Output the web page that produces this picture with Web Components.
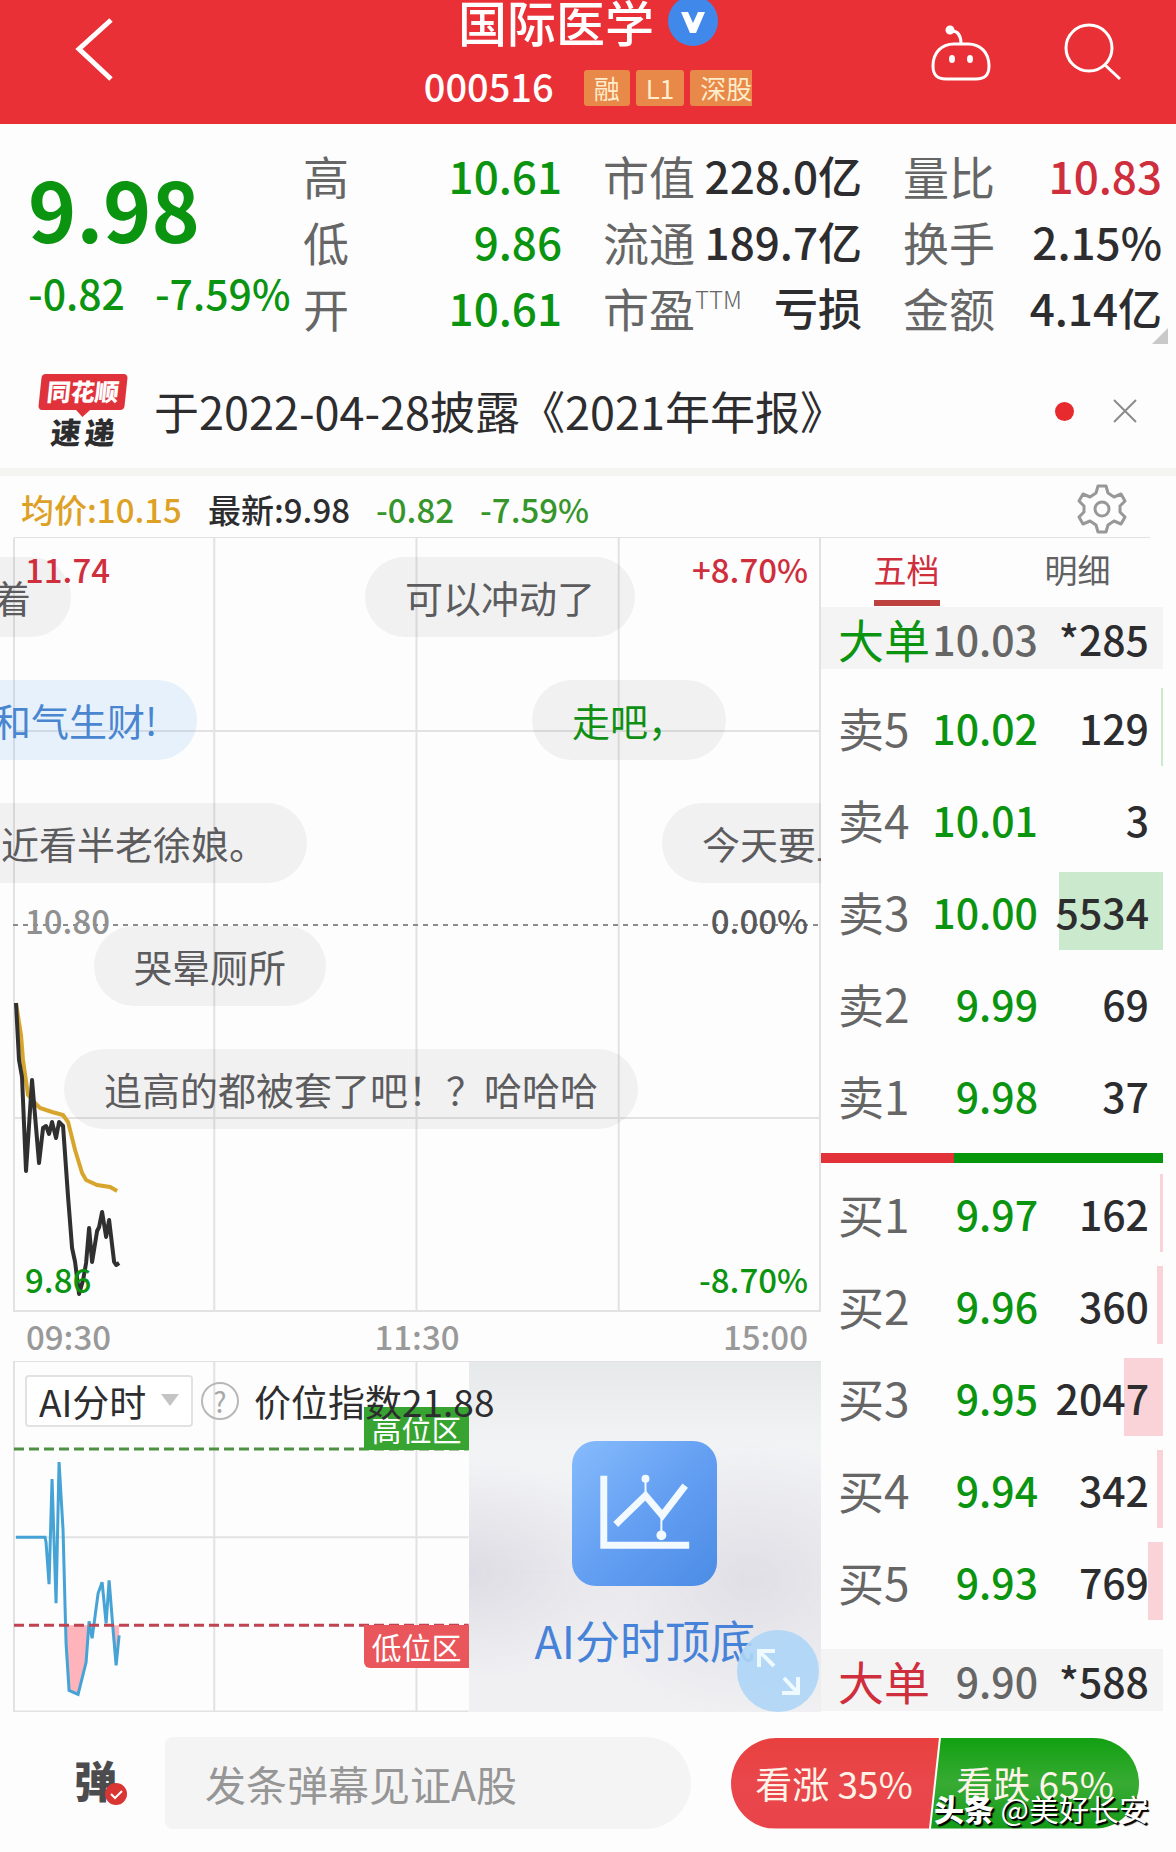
<!DOCTYPE html>
<html lang="zh-CN">
<head>
<meta charset="utf-8">
<meta name="viewport" content="width=device-width, initial-scale=1">
<title>国际医学 000516</title>
<style>
  body {
    margin: 0;
    background: #fdfdfd;
    color: #2d2d2f;
    font-family: "Noto Sans CJK SC", sans-serif;
    --red: #e93036;
    --green: #0a9410;
    --text-red: #cf2f3d;
    --label: #666;
    --line: #e2e2e2;
  }
  .board {
    display: grid;
    grid-template-columns: minmax(0, 1fr) 342px;
    padding: 0 13px;
  }
</style>
</head>
<body>
<stock-header name="国际医学" code="000516">
  <span slot="tag">融</span>
  <span slot="tag">L1</span>
  <span slot="tag">深股</span>
</stock-header>
<quote-summary price="9.98" change="-0.82" percent="-7.59%"></quote-summary>
<news-bar>于2022-04-28披露《2021年年报》</news-bar>
<info-row></info-row>
<main class="board">
  <div>
    <minute-chart>
      <bullet-text style="left: -60px; top: 19px">着</bullet-text>
      <bullet-text style="left: 352px; top: 19px">可以冲动了</bullet-text>
      <bullet-text style="left: -60px; top: 142px" tone="blue">和气生财!</bullet-text>
      <bullet-text style="left: 519px; top: 142px" tone="green">走吧，</bullet-text>
      <bullet-text style="left: -52px; top: 265px">近看半老徐娘。</bullet-text>
      <bullet-text style="left: 649px; top: 265px">今天要上</bullet-text>
      <bullet-text style="left: 81px; top: 388px">哭晕厕所</bullet-text>
      <bullet-text style="left: 51px; top: 511px">追高的都被套了吧！？哈哈哈</bullet-text>
    </minute-chart>
    <ai-chart></ai-chart>
  </div>
  <order-book></order-book>
</main>
<bottom-bar>
  <vote-bar up="35" down="65"></vote-bar>
</bottom-bar>

<script>
class StockHeader extends HTMLElement {
  constructor() {
    super();
    this.attachShadow({ mode: "open" });
  }

  static get styles() {
    return `
:host {
  display: grid;
  grid-template-columns: 1fr auto 1fr;
  height: 124px;
  background: var(--red);
  color: #fff;
  overflow: hidden;
}
button {
  padding: 0;
  border: 0;
  background: none;
  color: inherit;
}
svg { display: block; fill: none; stroke: currentColor; }
.back { justify-self: start; align-self: start; padding: 17px 0 0 74px; }
.center { display: flex; flex-direction: column; align-items: center; }
.title { display: flex; align-items: flex-start; gap: 14px; height: 60px; }
h1 { margin: 0; font-size: 49px; line-height: 42px; font-weight: 500; }
.verified { margin-top: -4px; stroke: none; }
.code { display: flex; align-items: center; height: 52px; font-size: 38px; line-height: 52px; font-weight: 500; }
.tags { display: flex; gap: 6px; margin: 4px 0 0 30px; }
::slotted(span) {
  padding: 0 10px;
  border-radius: 3px;
  background: #e8894a;
  color: #ffeccb;
  font-size: 26px;
  line-height: 36px;
  font-weight: 400;
}
::slotted(span:last-of-type) { padding-right: 0; border-radius: 3px 0 0 3px; }
.tools { display: flex; justify-content: flex-end; align-items: flex-start; gap: 72px; padding: 22px 54px 0 0; }
`;
  }

  connectedCallback() {
    this.shadowRoot.innerHTML = `
      <style>${StockHeader.styles}</style>
      <button class="back" aria-label="返回">
        <svg width="42" height="64" viewBox="0 0 42 64" stroke-width="5"><path d="M37 3 5 32 37 62"/></svg>
      </button>
      <div class="center">
        <div class="title">
          <h1>${this.getAttribute("name")}</h1>
          <svg class="verified" width="50" height="50" viewBox="0 0 50 50">
            <circle cx="25" cy="25" r="25" fill="#4089ea"/>
            <path d="M13 16h7l5 11 5-11h7L28 37h-6z" fill="#fff"/>
          </svg>
        </div>
        <div class="code">${this.getAttribute("code")}<div class="tags"><slot name="tag"></slot></div></div>
      </div>
      <div class="tools">
        <button aria-label="智能助手">
          <svg width="62" height="60" viewBox="0 0 62 60" stroke-width="3">
            <path d="M31 22c0-8-3-13-9-13"/>
            <circle cx="20" cy="8" r="3" fill="#fff"/>
            <path d="M24 22h14c13 0 21 9 21 22 0 9-4 13-13 13H16C7 57 3 53 3 44c0-13 8-22 21-22z"/>
            <g fill="#fff" stroke="none"><ellipse cx="22" cy="37" rx="3" ry="4"/><ellipse cx="40" cy="37" rx="3" ry="4"/></g>
          </svg>
        </button>
        <button aria-label="搜索">
          <svg width="58" height="60" viewBox="0 0 58 60" stroke-width="3"><circle cx="25" cy="26" r="23"/><path d="M41 43 56 57"/></svg>
        </button>
      </div>`;
  }
}
customElements.define("stock-header", StockHeader);

class QuoteSummary extends HTMLElement {
  constructor() {
    super();
    this.attachShadow({ mode: "open" });
  }

  static get styles() {
    return `
:host {
  display: grid;
  grid-template-columns: minmax(0, 234fr) repeat(3, minmax(0, 259fr));
  column-gap: 41px;
  position: relative;
  padding: 18px 14px 14px 28px;
  color: #2d2d2f;
}
.price { padding-top: 20px; color: var(--green); white-space: nowrap; }
.now { font-size: 82px; line-height: 92px; font-weight: 700; }
.diff { display: flex; gap: 30px; margin-top: 14px; font-size: 41px; line-height: 48px; font-weight: 500; }
dl { margin: 0; }
dl div { display: flex; justify-content: space-between; height: 66px; line-height: 66px; white-space: nowrap; }
dt { color: var(--label); font-size: 46px; display: flex; }
sup { font-size: 24px; line-height: 50px; font-weight: 300; }
dd { margin: 0; font-size: 44px; font-weight: 500; }
.down { color: var(--green); }
.up { color: var(--text-red); }
.corner { position: absolute; right: 8px; bottom: 10px; fill: #c9c9c9; }
`;
  }

  get groups() {
    return [
      [["高", "10.61", "down"], ["低", "9.86", "down"], ["开", "10.61", "down"]],
      [["市值", "228.0亿", ""], ["流通", "189.7亿", ""], ["市盈<sup>TTM</sup>", "亏损", ""]],
      [["量比", "10.83", "up"], ["换手", "2.15%", ""], ["金额", "4.14亿", ""]]
    ];
  }

  getGroups() {
    return this.groups
      .map(rows => `<dl>${rows
        .map(([label, value, tone]) => `<div><dt>${label}</dt><dd class="${tone}">${value}</dd></div>`).join("")}</dl>`)
      .join("");
  }

  connectedCallback() {
    this.shadowRoot.innerHTML = `
      <style>${QuoteSummary.styles}</style>
      <div class="price">
        <div class="now">${this.getAttribute("price")}</div>
        <div class="diff"><span>${this.getAttribute("change")}</span><span>${this.getAttribute("percent")}</span></div>
      </div>
      ${this.getGroups()}
      <svg class="corner" width="16" height="16"><path d="M16 0v16H0z"/></svg>`;
  }
}
customElements.define("quote-summary", QuoteSummary);

class NewsBar extends HTMLElement {
  constructor() {
    super();
    this.attachShadow({ mode: "open" });
  }

  static get styles() {
    return `
:host {
  display: flex;
  align-items: center;
  height: 114px;
  padding: 0 38px;
  border-bottom: 8px solid #f4f4f2;
}
.logo { width: 90px; text-align: center; font-weight: 900; }
.logo b {
  display: block;
  position: relative;
  height: 36px;
  margin: 0 2px;
  border-radius: 4px;
  background: #e0323a;
  color: #fff;
  font-size: 24px;
  line-height: 34px;
  font-weight: 900;
  transform: skewX(-6deg);
}
.logo b::after {
  content: "";
  position: absolute;
  left: 38px;
  top: 36px;
  border: 7px solid transparent;
  border-top-color: #e0323a;
  border-bottom: 0;
}
.logo i { display: flex; justify-content: center; gap: 4px; margin-top: 4px; font-size: 30px; line-height: 34px; font-style: normal; transform: skewX(-6deg); }
a { flex: 1; margin-left: 26px; color: #2d2d2f; font-size: 45px; line-height: 60px; text-decoration: none; white-space: nowrap; }
.dot { width: 19px; height: 19px; border-radius: 50%; background: #e62a2e; }
button { margin-left: 38px; padding: 0; border: 0; background: none; color: #8b8b8b; }
svg { display: block; }
`;
  }

  connectedCallback() {
    this.shadowRoot.innerHTML = `
      <style>${NewsBar.styles}</style>
      <div class="logo"><b>同花顺</b><i><span>速</span><span>递</span></i></div>
      <a href="#"><slot></slot></a>
      <span class="dot"></span>
      <button aria-label="关闭">
        <svg width="26" height="26" viewBox="0 0 26 26" stroke="currentColor" stroke-width="2"><path d="M2 2 24 24M24 2 2 24"/></svg>
      </button>`;
  }
}
customElements.define("news-bar", NewsBar);

class InfoRow extends HTMLElement {
  constructor() {
    super();
    this.attachShadow({ mode: "open" });
  }

  static get styles() {
    return `
:host {
  display: flex;
  align-items: center;
  gap: 26px;
  height: 57px;
  margin: 0 26px 0 14px;
  padding: 4px 22px 0 7px;
  border-bottom: 1px solid var(--line);
  font-size: 33px;
  line-height: 48px;
  font-weight: 500;
}
.avg { color: #dda125; }
.down { color: #36952b; }
button { margin-left: auto; padding: 0; border: 0; background: none; }
svg { display: block; }
`;
  }

  connectedCallback() {
    this.shadowRoot.innerHTML = `
      <style>${InfoRow.styles}</style>
      <span class="avg">均价:10.15</span>
      <span>最新:9.98</span>
      <span class="down">-0.82</span>
      <span class="down">-7.59%</span>
      <button aria-label="设置">
        <svg width="52" height="52" viewBox="0 0 52 52" fill="none" stroke="#989898" stroke-width="3" stroke-linejoin="round">
          <path d="M22 3h8l2 7 6 4 7-3 4 7-5 5v6l5 5-4 7-7-3-6 4-2 7h-8l-2-7-6-4-7 3-4-7 5-5v-6l-5-5 4-7 7 3 6-4z"/>
          <circle cx="26" cy="26" r="7"/>
        </svg>
      </button>`;
  }
}
customElements.define("info-row", InfoRow);

class BulletText extends HTMLElement {
  constructor() {
    super();
    this.attachShadow({ mode: "open" });
  }

  static get styles() {
    return `
:host {
  position: absolute;
  padding: 0 40px;
  border-radius: 41px;
  background: rgba(120, 120, 130, 0.09);
  color: #5c5c5e;
  font-size: 38px;
  line-height: 80px;
  font-weight: 400;
  white-space: nowrap;
}
:host([tone="blue"]) { background: rgba(90, 170, 240, 0.14); color: #4a86d0; }
:host([tone="green"]) { color: #0f8f14; }
`;
  }

  connectedCallback() {
    this.shadowRoot.innerHTML = `<style>${BulletText.styles}</style><slot></slot>`;
  }
}
customElements.define("bullet-text", BulletText);

class MinuteChart extends HTMLElement {
  constructor() {
    super();
    this.attachShadow({ mode: "open" });
  }

  static get styles() {
    return `
:host { display: block; font-size: 33px; line-height: 48px; font-weight: 500; }
.plot { position: relative; height: 774px; }
svg { display: block; width: 100%; height: 100%; }
svg * { vector-effect: non-scaling-stroke; fill: none; }
.grid { stroke: var(--line); stroke-width: 2; }
.bullets { position: absolute; inset: 0 0 0 -13px; overflow: hidden; }
.bullets div { position: absolute; inset: 0 0 0 13px; }
.scale {
  position: absolute;
  inset: 7px 13px 9px 12px;
  display: flex;
  flex-direction: column;
  justify-content: space-between;
}
.scale.right { align-items: flex-end; }
.up { color: var(--text-red); }
.down { color: var(--green); }
.flat { color: #909090; padding-bottom: 8px; }
.dark { color: #58585a; padding-bottom: 8px; }
.times { display: flex; justify-content: space-between; height: 49px; padding: 0 13px; color: #999; border-bottom: 1px solid var(--line); }
`;
  }

  connectedCallback() {
    this.shadowRoot.innerHTML = `
      <style>${MinuteChart.styles}</style>
      <div class="plot">
        <svg viewBox="0 0 807 774" preserveAspectRatio="none">
          <path class="grid" d="M1 0V774M201 0V774M403 0V774M605 0V774M806 0V774M0 193H807M0 580H807M0 773H807"/>
          <path d="M0 387H807" stroke="#8c8c8c" stroke-width="2" stroke-dasharray="5 5"/>
          <polyline stroke="#d8a52c" stroke-width="4" points="3,465 8,497 10,522 15,557 22,565 27,570 39,574 50,577 55,584 62,612 69,635 73,642 84,647 97,649 104,653"/>
          <polyline stroke="#303030" stroke-width="4" stroke-linejoin="round" points="3,465 6,522 9,539 13,633 19,542 26,625 30,590 33,588 36,596 39,584 43,600 46,584 50,588 55,659 59,710 62,724 66,756 70,742 73,725 76,690 79,724 84,693 86,689 89,674 93,699 96,682 101,724 103,727 106,725"/>
        </svg>
        <div class="bullets"><div><slot></slot></div></div>
        <div class="scale"><span class="up">11.74</span><span class="flat">10.80</span><span class="down">9.86</span></div>
        <div class="scale right"><span class="up">+8.70%</span><span class="dark">0.00%</span><span class="down">-8.70%</span></div>
      </div>
      <div class="times"><span>09:30</span><span>11:30</span><span>15:00</span></div>`;
  }
}
customElements.define("minute-chart", MinuteChart);

class AiChart extends HTMLElement {
  constructor() {
    super();
    this.attachShadow({ mode: "open" });
  }

  static get styles() {
    return `
:host { display: grid; grid-template-columns: minmax(0, 455fr) minmax(0, 352fr); height: 350px; position: relative; }
.plot { position: relative; }
.plot > svg { display: block; width: 100%; height: 100%; }
.plot > svg * { vector-effect: non-scaling-stroke; fill: none; }
.grid { stroke: var(--line); stroke-width: 2; }
.plot > svg .low { fill: #ffb3ba; }
.zone { position: absolute; right: 0; padding: 0 7px 0 8px; color: #fff; font-size: 30px; line-height: 43px; }
.zone.high { top: 45px; background: #37a431; }
.zone.bottom { top: 263px; background: #e9565b; border-radius: 0 0 0 6px; }
.controls { position: absolute; left: 12px; top: 12px; display: flex; align-items: center; font-size: 37px; white-space: nowrap; }
.pick { position: relative; }
.pick svg { position: absolute; right: 14px; top: 20px; pointer-events: none; }
select {
  appearance: none;
  box-sizing: border-box;
  width: 168px;
  height: 52px;
  padding: 0 12px;
  border: 2px solid #e2e2e4;
  border-radius: 4px;
  background: #fff;
  color: #2d2d2f;
  font: inherit;
  line-height: 46px;
}
.help { margin: 0 15px 0 8px; padding: 0; border: 2px solid #b8b8b8; border-radius: 50%; width: 38px; height: 38px; background: none; color: #a8a8a8; font: 28px/32px "Noto Sans CJK SC", sans-serif; }
.promo {
  display: flex;
  flex-direction: column;
  align-items: center;
  position: relative;
  padding-top: 79px;
  background:
    radial-gradient(ellipse at 0 60%, rgba(214, 212, 222, 0.7), transparent 36%),
    radial-gradient(ellipse at 80% 62%, rgba(220, 219, 227, 0.8), transparent 45%),
    linear-gradient(#e6e9ea, #f2f3f5 24%, #f0f0f3 60%, #f0f0f2);
  color: #4683d8;
  font-size: 45px;
  line-height: 60px;
  text-decoration: none;
}
.promo span { margin-top: 24px; }
.expand { position: absolute; right: 2px; bottom: 0; padding: 0; border: 0; background: none; }
.expand svg, .promo svg { display: block; }
`;
  }

  connectedCallback() {
    this.shadowRoot.innerHTML = `
      <style>${AiChart.styles}</style>
      <div class="plot">
        <svg viewBox="0 0 455 350" preserveAspectRatio="none">
          <path class="grid" d="M1 0V350M201 0V350M403 0V350M0 175H455M0 349H455"/>
          <path class="low" d="M52 263 53 281 56 328 65 332 73 300 75 263zM99 263 103 303 106 273V263z"/>
          <polyline stroke="#45a3d6" stroke-width="3" points="3,175 32,175 33,180 36,222 39,117 43,241 46,100 50,168 52,245 53,281 56,328 65,332 73,300 76,259 79,276 85,231 89,220 93,261 96,218 100,268 103,303 106,273"/>
          <path d="M1 87H455" stroke="#4f9143" stroke-width="3" stroke-dasharray="10 5"/>
          <path d="M1 263H455" stroke="#bd4450" stroke-width="3" stroke-dasharray="10 5"/>
        </svg>
        <div class="zone high">高位区</div>
        <div class="zone bottom">低位区</div>
      </div>
      <a class="promo" href="#">
        <svg width="145" height="145" viewBox="0 0 146 146">
          <defs><linearGradient id="tile" x1="0" y1="0" x2="1" y2="1"><stop offset="0" stop-color="#87bcfc"/><stop offset="0.5" stop-color="#649ff2"/><stop offset="1" stop-color="#4c8ce6"/></linearGradient></defs>
          <rect width="146" height="146" rx="24" fill="url(#tile)"/>
          <g fill="none" stroke="#f2faff" stroke-width="7"><path d="M32 35V105H118"/><path d="M44 84 74 55 91 75 114 45"/></g>
          <g fill="#f2faff" stroke="#f2faff" stroke-width="2"><path d="M74 55V38M90 75V94"/><circle cx="74" cy="38" r="3"/><circle cx="90" cy="95" r="4"/></g>
        </svg>
        <span>AI分时顶底</span>
      </a>
      <div class="controls">
        <div class="pick">
          <select aria-label="指标"><option>AI分时</option></select>
          <svg width="18" height="12"><path d="M0 0H18L9 12z" fill="#c4c4c4"/></svg>
        </div>
        <button class="help" aria-label="说明">?</button>
        <span>价位指数21.88</span>
      </div>
      <button class="expand" aria-label="展开">
        <svg width="82" height="82" viewBox="0 0 82 82">
          <circle cx="41" cy="41" r="41" fill="#add5f6" opacity="0.9"/>
          <path d="M37 36 23 22M22 37V21H38M47 48 60 62M61 47V63H45" fill="none" stroke="#eefaff" stroke-width="4"/>
        </svg>
      </button>`;
  }
}
customElements.define("ai-chart", AiChart);

class OrderBook extends HTMLElement {
  constructor() {
    super();
    this.attachShadow({ mode: "open" });
  }

  static get styles() {
    return `
:host { display: block; font-size: 41px; font-weight: 500; }
.tabs { display: grid; grid-template-columns: 1fr 1fr; justify-items: center; align-items: start; height: 69px; }
.tabs button {
  padding: 0;
  border: 0;
  background: none;
  color: #626264;
  font: 400 33px/62px "Noto Sans CJK SC", sans-serif;
}
.tabs .active { color: var(--text-red); border-bottom: 6px solid #bd423f; }
table { width: 100%; border-collapse: collapse; table-layout: fixed; }
th, td { padding: 0; height: 92px; text-align: right; line-height: 60px; white-space: nowrap; }
th { width: 94px; padding-left: 17px; color: var(--label); text-align: left; font-size: 46px; font-weight: 400; }
td.price { width: 106px; color: var(--green); }
td.count { position: relative; padding-right: 14px; }
td.count i { position: absolute; right: 0; top: 7px; height: 78px; background: #f9d3d8; }
td.count i.sell { background: #cbe9cd; }
td.count span { position: relative; }
.big { background: #f5f4f4; }
.big th, .big td { height: 62px; }
.big th { color: var(--text-red); }
.big td.price { color: var(--label); }
.sells .big th { color: var(--green); }
.sells .gap td { height: 12px; }
.buys .gap td { height: 22px; }
.ratio { display: flex; height: 10px; margin: 12px 0 4px; background: #05960c; }
.ratio div { width: 39%; background: #e13239; }
`;
  }

  get sells() {
    return [["卖5", "10.02", 129, 2], ["卖4", "10.01", 3, 0], ["卖3", "10.00", 5534, 104], ["卖2", "9.99", 69, 0], ["卖1", "9.98", 37, 0]];
  }

  get buys() {
    return [["买1", "9.97", 162, 3], ["买2", "9.96", 360, 6], ["买3", "9.95", 2047, 39], ["买4", "9.94", 342, 6], ["买5", "9.93", 769, 15]];
  }

  getRows(rows, side) {
    return rows
      .map(([label, price, count, depth]) => `<tr><th>${label}</th><td class="price">${price}</td>
        <td class="count"><i class="${side}" style="width: ${depth}px"></i><span>${count}</span></td></tr>`).join("");
  }

  getBigRow(price, count) {
    return `<tr class="big"><th>大单</th><td class="price">${price}</td><td class="count">*${count}</td></tr>`;
  }

  connectedCallback() {
    this.shadowRoot.innerHTML = `
      <style>${OrderBook.styles}</style>
      <div class="tabs"><button class="active">五档</button><button>明细</button></div>
      <table class="sells">${this.getBigRow("10.03", 285)}<tr class="gap"><td colspan="3"></td></tr>${this.getRows(this.sells, "sell")}</table>
      <div class="ratio"><div></div></div>
      <table class="buys">${this.getRows(this.buys, "buy")}<tr class="gap"><td colspan="3"></td></tr>${this.getBigRow("9.90", 588)}</table>`;
  }
}
customElements.define("order-book", OrderBook);

class VoteBar extends HTMLElement {
  constructor() {
    super();
    this.attachShadow({ mode: "open" });
  }

  static get styles() {
    return `
:host { display: flex; height: 91px; border-radius: 46px; overflow: hidden; }
button { padding: 0; border: 0; color: #fff3e8; font: 37px/90px "Noto Sans CJK SC", sans-serif; white-space: nowrap; }
.up { width: 208px; padding-right: 2px; background: linear-gradient(#e8403f, #e9474b 50%, #e9434a); clip-path: polygon(0 0, 100% 0, 198px 100%, 0 100%); }
.down { width: 208px; margin-left: -8px; background: linear-gradient(#12a012, #38ab33 50%, #149b18); clip-path: polygon(10px 0, 100% 0, 100% 100%, 0 100%); }
`;
  }

  connectedCallback() {
    this.shadowRoot.innerHTML = `
      <style>${VoteBar.styles}</style>
      <button class="up">看涨 ${this.getAttribute("up")}%</button>
      <button class="down">看跌 ${this.getAttribute("down")}%</button>`;
  }
}
customElements.define("vote-bar", VoteBar);

class BottomBar extends HTMLElement {
  constructor() {
    super();
    this.attachShadow({ mode: "open" });
  }

  static get styles() {
    return `
:host { display: flex; align-items: center; position: relative; padding: 25px 37px 22px 74px; }
.toggle { position: relative; margin-bottom: 8px; padding: 0; border: 0; background: none; color: #4c4c4e; font: 900 43px/50px "Noto Sans CJK SC", sans-serif; }
.toggle svg { position: absolute; left: 30px; top: 28px; }
input {
  flex: 1;
  min-width: 0;
  box-sizing: border-box;
  height: 92px;
  margin: 0 40px 0 48px;
  padding: 0 40px;
  border: 0;
  border-radius: 8px 46px 46px 8px;
  background: #f5f4f5;
  font: 41px "Noto Sans CJK SC", sans-serif;
}
input::placeholder { color: #969696; opacity: 1; }
.author {
  position: absolute;
  right: 27px;
  bottom: 21px;
  color: #fff;
  font-size: 30px;
  line-height: 44px;
  text-shadow: 2px 2px 1px #000, 1px 1px 0 #000;
}
.author b { font-weight: 900; }
`;
  }

  connectedCallback() {
    this.shadowRoot.innerHTML = `
      <style>${BottomBar.styles}</style>
      <button class="toggle" aria-label="弹幕开关">弹<svg width="24" height="24" viewBox="0 0 24 24"><circle cx="12" cy="12" r="11" fill="#d93532"/><path d="M7 12 11 16 18 9" fill="none" stroke="#fff" stroke-width="2"/></svg></button>
      <input type="text" aria-label="弹幕" placeholder="发条弹幕见证A股">
      <slot></slot>
      <div class="author"><b>头条</b> @美好长安</div>`;
  }
}
customElements.define("bottom-bar", BottomBar);
</script>
</body>
</html>
